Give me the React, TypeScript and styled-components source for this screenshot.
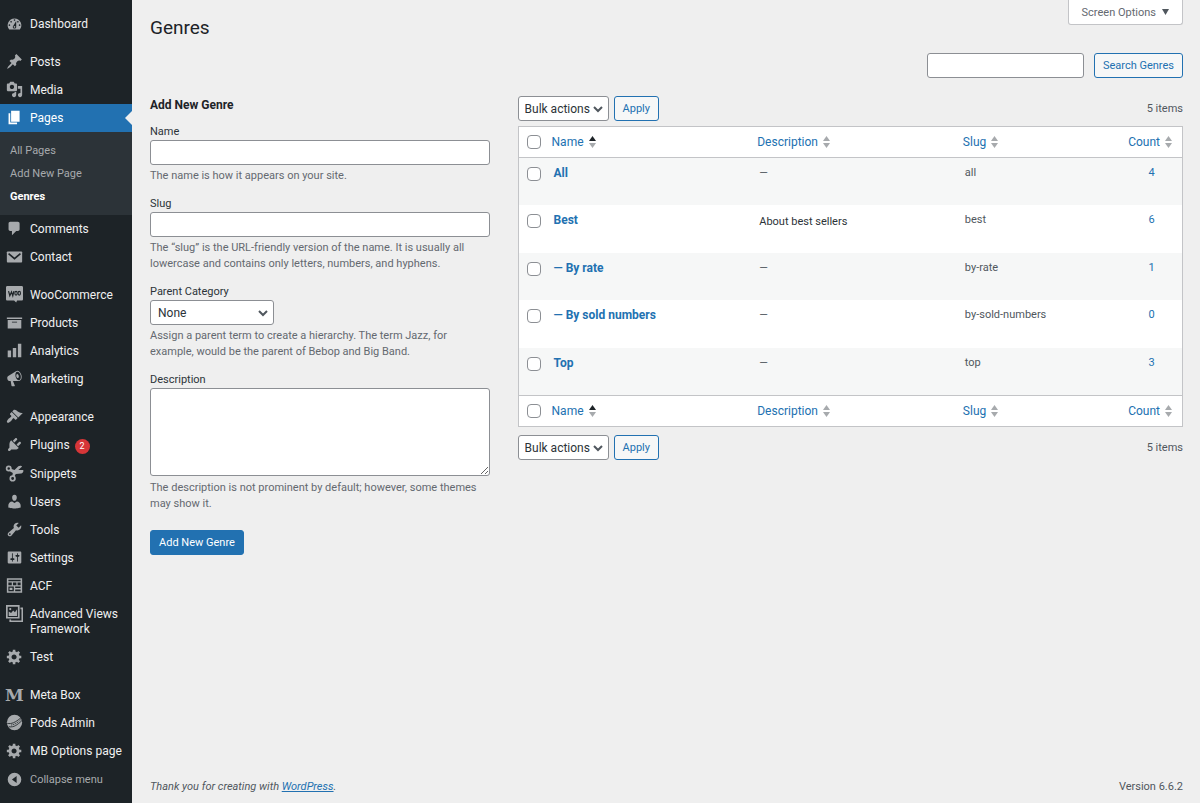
import React, { ReactNode } from "react";
import styled, { createGlobalStyle, css } from "styled-components";

const blue = "#2271b1";
const font = `Roboto, "Open Sans", sans-serif`;

const GlobalStyle = createGlobalStyle`
  *, *::before, *::after { box-sizing: border-box; }
  body { margin: 0; background: #efefef; color: #3c434a; font: 11px/16px ${font}; }
  button, input, select, textarea { font-family: inherit; margin: 0; }
  a { color: ${blue}; text-decoration: none; }
  h1, h2, p, ul { margin: 0; padding: 0; }
`;

/* ---------- icons ---------- */

const paths = {
  dashboard:
    "M3.76 17h12.48A7.998 7.998 0 0 0 10 4a7.998 7.998 0 0 0-6.24 13zM10 5c.55 0 1 .45 1 1s-.45 1-1 1-1-.45-1-1 .45-1 1-1zM6 7c.55 0 1 .45 1 1s-.45 1-1 1-1-.45-1-1 .45-1 1-1zm8 0c.55 0 1 .45 1 1s-.45 1-1 1-1-.45-1-1 .45-1 1-1zm-5.37 5.55L12 7v7c0 1.1-.9 2-2 2s-2-.9-2-2c0-.57.24-1.08.63-1.45zM4 11c.55 0 1 .45 1 1s-.45 1-1 1-1-.45-1-1 .45-1 1-1zm12 0c.55 0 1 .45 1 1s-.45 1-1 1-1-.45-1-1 .45-1 1-1zm-5 3c0-.55-.45-1-1-1s-1 .45-1 1 .45 1 1 1 1-.45 1-1z",
  pin: "M10.44 3.02l1.82-1.82 6.36 6.35-1.83 1.82c-1.05-.68-2.48-.57-3.41.36l-.75.75c-.92.93-1.04 2.35-.35 3.41l-1.83 1.82-2.41-2.41-2.8 2.79c-.42.42-3.38 2.71-3.8 2.29s1.86-3.39 2.28-3.81l2.79-2.79L4.1 9.36l1.83-1.82c1.05.69 2.48.57 3.4-.36l.75-.75c.93-.92 1.05-2.35.36-3.41z",
  media:
    "M13 11V4c0-.55-.45-1-1-1h-1.67L9 1H5L3.67 3H2c-.55 0-1 .45-1 1v7c0 .55.45 1 1 1h10c.55 0 1-.45 1-1zM7 4.5c1.38 0 2.5 1.12 2.5 2.5S8.38 9.5 7 9.5 4.5 8.38 4.5 7 5.62 4.5 7 4.5zM14 6h5v10.5c0 1.38-1.12 2.5-2.5 2.5S14 17.88 14 16.5s1.12-2.5 2.5-2.5c.17 0 .34.02.5.05V9h-3V6zm-4 8.05V13h2v3.5c0 1.38-1.12 2.5-2.5 2.5S7 17.88 7 16.5 8.12 14 9.5 14c.17 0 .34.02.5.05z",
  pages: "M6 15V2h10v13H6zm-1 1h8v2H3V5h2v11z",
  comment:
    "M5 2h9c1.1 0 2 .9 2 2v7c0 1.1-.9 2-2 2h-2l-5 5v-5H5c-1.1 0-2-.9-2-2V4c0-1.1.9-2 2-2z",
  archive: "M19 4v2H1V4h18zM2 7h16v10H2V7zm11 3V9H7v1h6z",
  bars: "M18 18V2h-4v16h4zm-6 0V7H8v11h4zm-6 0v-8H2v8h4z",
  megaphone:
    "M18.15 5.94c.46 1.62.38 3.22-.02 4.48-.42 1.28-1.26 2.18-2.3 2.48-.16.06-.26.06-.4.06-.06.02-.12.02-.18.02-.06.02-.14.02-.22.02h-6.8l2.22 5.5c.02.14-.06.26-.14.34-.08.1-.24.16-.34.16H6.95c-.1 0-.26-.06-.34-.16-.08-.08-.16-.2-.14-.34l-1-5.5H4.25l-.02-.02c-.5.06-1.08-.18-1.54-.62s-.88-1.08-1.06-1.88c-.24-.8-.2-1.56-.02-2.2.18-.62.58-1.08 1.06-1.3l.02-.02 9-5.4c.1-.06.18-.1.24-.16.06-.04.14-.08.24-.12.16-.08.28-.12.5-.18 1.04-.3 2.24.1 3.22.98s1.84 2.24 2.26 3.86zm-2.58 5.98h-.02c.4-.1.74-.34 1.04-.7.58-.7.86-1.76.86-3.04 0-.64-.1-1.3-.28-1.98-.34-1.36-1.02-2.5-1.78-3.24s-1.68-1.1-2.46-.88c-.82.22-1.4.96-1.7 2-.32 1.04-.28 2.36.06 3.72.38 1.36 1 2.5 1.8 3.24.78.74 1.62 1.1 2.48.88zm-2.54-7.08c.22-.04.42-.02.62.04.38.16.76.48 1.02 1s.42 1.2.42 1.78c0 .3-.04.56-.12.8-.18.48-.44.84-.86.94-.34.1-.8-.06-1.14-.4s-.64-.86-.78-1.5c-.18-.62-.12-1.24.02-1.72s.48-.84.82-.94z",
  brush:
    "M14.48 11.06L7.41 3.99l1.5-1.5c.5-.56 2.3-.47 3.51.32 1.21.8 1.43 1.28 2.91 2.1 1.18.64 2.45 1.26 4.45.85zm-.71.71L6.7 4.7 4.93 6.47c-.39.39-.39 1.02 0 1.41l1.06 1.06c.39.39.39 1.03 0 1.42-.6.6-1.43 1.11-2.21 1.69-.35.26-.7.53-1.01.84C1.43 14.23.4 16.08 1.4 17.07c.99 1 2.84-.03 4.18-1.36.31-.31.58-.66.85-1.02.57-.78 1.08-1.61 1.69-2.21.39-.39 1.02-.39 1.41 0l1.06 1.06c.39.39 1.02.39 1.41 0z",
  plug: "M13.11 4.36L9.87 7.6 8 5.73l3.24-3.24c.35-.34 1.05-.2 1.56.32.52.51.66 1.21.31 1.55zm-8 1.77l.91-1.12 9.01 9.01-1.19.84c-.71.71-2.63 1.16-3.82 1.16H6.14L4.9 17.26c-.59.59-1.54.59-2.12 0-.59-.58-.59-1.53 0-2.12l1.24-1.24v-3.88c0-1.13.4-3.19 1.09-3.89zm7.26 3.97l3.24-3.24c.34-.35 1.04-.21 1.55.31.52.51.66 1.21.31 1.55l-3.24 3.25z",
  user: "M10 9.25c-2.27 0-2.73-3.44-2.73-3.44C7 4.02 7.82 2 9.97 2c2.16 0 2.98 2.02 2.71 3.81 0 0-.41 3.44-2.68 3.44zm0 2.57L12.72 10c2.39 0 4.52 2.33 4.52 4.53v2.49s-3.65 1.13-7.24 1.13c-3.65 0-7.24-1.13-7.24-1.13v-2.49c0-2.25 1.94-4.48 4.47-4.48z",
  wrench:
    "M16.68 9.77c-1.34 1.34-3.3 1.67-4.95.99l-5.41 6.52c-.99.99-2.59.99-3.58 0s-.99-2.59 0-3.57l6.52-5.42c-.68-1.65-.35-3.61.99-4.95 1.28-1.28 3.12-1.62 4.72-1.06l-2.89 2.89 2.82 2.82 2.86-2.87c.53 1.58.18 3.39-1.08 4.65zM3.81 16.21c.4.39 1.04.39 1.43 0 .4-.4.4-1.04 0-1.43-.39-.4-1.03-.4-1.43 0-.39.39-.39 1.03 0 1.43z",
  sliders:
    "M18 16V4c0-.55-.45-1-1-1H3c-.55 0-1 .45-1 1v12c0 .55.45 1 1 1h14c.55 0 1-.45 1-1zM8 11h1c.55 0 1 .45 1 1s-.45 1-1 1H8v1.5c0 .28-.22.5-.5.5s-.5-.22-.5-.5V13H6c-.55 0-1-.45-1-1s.45-1 1-1h1V5.5c0-.28.22-.5.5-.5s.5.22.5.5V11zm5-2h-1c-.55 0-1-.45-1-1s.45-1 1-1h1V5.5c0-.28.22-.5.5-.5s.5.22.5.5V7h1c.55 0 1 .45 1 1s-.45 1-1 1h-1v5.5c0 .28-.22.5-.5.5s-.5-.22-.5-.5V9z",
  gear: "M18 12h-2.18c-.17.7-.44 1.35-.81 1.93l1.54 1.54-2.1 2.1-1.54-1.54c-.58.36-1.23.63-1.91.79V19H8v-2.18c-.68-.16-1.33-.43-1.91-.79l-1.54 1.54-2.12-2.12 1.54-1.54c-.36-.58-.63-1.23-.79-1.91H1V9.03h2.17c.16-.7.44-1.35.8-1.94L2.43 5.55l2.1-2.1 1.54 1.54c.58-.37 1.24-.64 1.93-.81V2h3v2.18c.68.16 1.33.43 1.91.79l1.54-1.54 2.12 2.12-1.54 1.54c.36.59.64 1.24.8 1.94H18V12zm-8.5 1.5c1.66 0 3-1.34 3-3s-1.34-3-3-3-3 1.34-3 3 1.34 3 3 3z",
};

const IconSvg = styled.svg`
  flex: none;
  width: 17px;
  height: 17px;
  fill: currentColor;
  overflow: visible;
`;

const Icon = ({ children }: { children: ReactNode }) => (
  <IconSvg viewBox="0 0 20 20" aria-hidden="true">{children}</IconSvg>
);
const glyph = (name: keyof typeof paths) => (
  <Icon><path fillRule="evenodd" d={paths[name]} /></Icon>
);

const mailIcon = (
  <Icon>
    <rect x="1" y="4" width="18" height="13" rx="1" />
    <path d="M3 6.500l7 6 7-6" fill="none" stroke="#1d2327" strokeWidth="1.900" />
  </Icon>
);
const wooIcon = (
  <Icon>
    <path d="M1.500 0h17c.8 0 1.500.7 1.500 1.500v14c0 .8-.7 1.500-1.500 1.500H13l-1 2.500L9.500 17h-8C.7 17 0 16.300 0 15.500v-14C0 .7.7 0 1.500 0z" />
    <path
      d="M3 6l1.500 5.500L6.500 7 8 11.500 9.300 6"
      fill="none" stroke="#1d2327" strokeWidth="1.400"
    />
    <ellipse cx="11.800" cy="8.500" rx="1.400" ry="2.200" fill="none" stroke="#1d2327" strokeWidth="1.300" />
    <ellipse cx="15.600" cy="8.500" rx="1.400" ry="2.200" fill="none" stroke="#1d2327" strokeWidth="1.300" />
  </Icon>
);
const scissorsIcon = (
  <Icon>
    <g fill="none" stroke="currentColor" strokeWidth="2">
      <circle cx="3.200" cy="4.200" r="2.500" />
      <circle cx="7.800" cy="15.800" r="2.700" />
    </g>
    <path d="M5 4l5 1.800L14.500 1.500c1.200-1 3.800-1 4.500.3L14.500 6h5.500c1 0 .5 4-2 4l-6.500.5-2 3.700-2.200-.8L8 9.500 4 7z" />
  </Icon>
);
const acfIcon = (
  <Icon>
    <path
      fillRule="evenodd"
      d="M1 1.500h18v17H1zM2.800 3.300V5h14.400V3.300zM2.800 6.600v3h4v-3zM8.200 6.600v3h4v-3zM13.600 6.600v3h3.600v-3zM2.800 11.200v5.500h6.400v-5.500zM10.800 11.200v1.600h6.400v-1.600zM10.800 14.600v2.100h6.400v-2.100zM4.200 12.500h3.400v2.800H4.200z"
    />
  </Icon>
);
const galleryIcon = (
  <Icon>
    <path fillRule="evenodd" d="M0 0h16v16H0zM2 2v12h12V2z" />
    <path d="M3.200 13V7.500L6 9.500l2.500-3 2 2L13 5v8z" />
    <circle cx="5" cy="4.800" r="1.300" />
    <path d="M17 3h3v17H4v-3h2v1.300h12.200V5H17z" />
  </Icon>
);
const metaBoxIcon = (
  <Icon>
    <text x="10" y="18" textAnchor="middle" fontFamily="DejaVu Serif" fontWeight="700" fontSize="20">M</text>
  </Icon>
);
const podsIcon = (
  <Icon>
    <circle cx="10" cy="10" r="9" />
    <path
      d="M1.500 11c5 1 9.500-1 16-6.500M3.500 15c6 1 10-2.500 15-7"
      fill="none" stroke="#1d2327" strokeWidth="1"
    />
    <path d="M6 13c4-.5 7.500-2.500 11.500-6.500" fill="none" stroke="#1d2327" strokeWidth="1" strokeDasharray="1.500 1" />
  </Icon>
);
const collapseIcon = (
  <Icon>
    <path fillRule="evenodd" d="M10 2a8 8 0 1 0 0 16 8 8 0 0 0 0-16zM12.500 6v8L7 10z" />
  </Icon>
);

/* ---------- sidebar ---------- */

const Layout = styled.div`
  display: flex;
  min-height: 100vh;
`;

const Sidebar = styled.nav`
  flex: none;
  width: 132px;
  padding-top: 10px;
  background: #1d2327;
`;

const MenuGroup = styled.ul`
  list-style: none;
  & + & { margin-top: 10px; }
`;

const MenuLink = styled.a<{ $current?: boolean }>`
  position: relative;
  display: flex;
  align-items: flex-start;
  gap: 7px;
  padding: 7px 6px 6px;
  color: #f0f0f1;
  font-size: 12px;
  line-height: 15px;
  svg { color: #a7aaad; margin-top: -2px; }
  ${(p) =>
    p.$current &&
    css`
      background: ${blue};
      color: #fff;
      svg { color: #fff; }
      &::after {
        content: "";
        position: absolute;
        top: 7px;
        right: 0;
        border: 7px solid transparent;
        border-left: 0;
        border-right-color: #efefef;
      }
    `}
`;

const Badge = styled.span`
  display: inline-block;
  min-width: 15px;
  margin-left: 5px;
  border-radius: 8px;
  background: #d63638;
  color: #fff;
  font-size: 9px;
  line-height: 15px;
  text-align: center;
`;

const Submenu = styled.ul`
  list-style: none;
  padding: 7px 0;
  background: #2c3338;
`;

const SubLink = styled.a<{ $current?: boolean }>`
  display: block;
  padding: 0 10px;
  color: ${(p) => (p.$current ? "#fff" : "#a7aaad")};
  font-size: 11px;
  font-weight: ${(p) => (p.$current ? 700 : 400)};
  line-height: 23px;
`;

const CollapseButton = styled.button`
  display: flex;
  align-items: center;
  gap: 7px;
  width: 100%;
  height: 28px;
  padding: 0 6px;
  border: 0;
  background: none;
  color: #a7aaad;
  font-size: 11px;
`;

type Item = { label: string; icon: ReactNode; badge?: number; current?: boolean; children?: string[] };

const menu: Item[][] = [
  [{ label: "Dashboard", icon: glyph("dashboard") }],
  [
    { label: "Posts", icon: glyph("pin") },
    { label: "Media", icon: glyph("media") },
    { label: "Pages", icon: glyph("pages"), current: true, children: ["All Pages", "Add New Page", "Genres"] },
    { label: "Comments", icon: glyph("comment") },
    { label: "Contact", icon: mailIcon },
  ],
  [
    { label: "WooCommerce", icon: wooIcon },
    { label: "Products", icon: glyph("archive") },
    { label: "Analytics", icon: glyph("bars") },
    { label: "Marketing", icon: glyph("megaphone") },
  ],
  [
    { label: "Appearance", icon: glyph("brush") },
    { label: "Plugins", icon: glyph("plug"), badge: 2 },
    { label: "Snippets", icon: scissorsIcon },
    { label: "Users", icon: glyph("user") },
    { label: "Tools", icon: glyph("wrench") },
    { label: "Settings", icon: glyph("sliders") },
    { label: "ACF", icon: acfIcon },
    { label: "Advanced Views Framework", icon: galleryIcon },
    { label: "Test", icon: glyph("gear") },
  ],
  [
    { label: "Meta Box", icon: metaBoxIcon },
    { label: "Pods Admin", icon: podsIcon },
    { label: "MB Options page", icon: glyph("gear") },
  ],
];

/* ---------- form controls ---------- */

const field = css`
  border: 1px solid #8c8f94;
  border-radius: 3px;
  background: #fff;
  color: #2c3338;
  font-size: 12px;
`;

const TextInput = styled.input`
  ${field}
  display: block;
  width: 100%;
  height: 25px;
  padding: 0 7px;
`;

const TextArea = styled.textarea`
  ${field}
  display: block;
  width: 100%;
  height: 88px;
  margin-bottom: 4px;
  padding: 2px 5px;
  resize: both;
`;

const SelectWrap = styled.div<{ $wide?: boolean }>`
  position: relative;
  width: ${(p) => (p.$wide ? 124 : 91)}px;
  svg {
    position: absolute;
    top: 7px;
    right: 5px;
    width: 12px;
    height: 12px;
    fill: none;
    stroke: #50575e;
    stroke-width: 2;
    pointer-events: none;
  }
`;

const SelectBox = styled.select<{ $wide?: boolean }>`
  ${field}
  appearance: none;
  display: block;
  width: 100%;
  height: 25px;
  padding: 0 ${(p) => (p.$wide ? 7 : 6)}px;
`;

const Select = ({ label, id, option, wide }: { label?: string; id: string; option: string; wide?: boolean }) => (
  <SelectWrap $wide={wide}>
    <SelectBox id={id} aria-label={label} $wide={wide}>
      <option>{option}</option>
    </SelectBox>
    <svg viewBox="0 0 12 12" aria-hidden="true"><path d="M2 4l4 4 4-4" /></svg>
  </SelectWrap>
);

const Button = styled.button<{ $primary?: boolean }>`
  height: 25px;
  padding: 0 8px;
  border: 1px solid ${blue};
  border-radius: 3px;
  background: ${(p) => (p.$primary ? blue : "#f6f7f7")};
  color: ${(p) => (p.$primary ? "#fff" : blue)};
  font-size: 11px;
  white-space: nowrap;
`;

const Checkbox = styled.input.attrs({ type: "checkbox" })`
  appearance: none;
  display: block;
  width: 14px;
  height: 14px;
  border: 1px solid #8c8f94;
  border-radius: 4px;
  background: #fff;
`;

/* ---------- page ---------- */

const Page = styled.div`
  flex: 1;
  min-width: 0;
  display: flex;
  flex-direction: column;
  padding: 0 17px 0 18px;
`;

const TopBar = styled.header`
  display: flex;
  justify-content: space-between;
  align-items: flex-start;
`;

const Title = styled.h1`
  padding-top: 15px;
  color: #1d2327;
  font-size: 19px;
  font-weight: 400;
  line-height: 26px;
`;

const ScreenOptions = styled.button`
  display: flex;
  align-items: center;
  gap: 6px;
  height: 25px;
  padding: 0 13px;
  border: 1px solid #c3c4c7;
  border-top: 0;
  border-radius: 0 0 3px 3px;
  background: #fff;
  color: #646970;
  font-size: 11px;
  svg { width: 7px; height: 6px; fill: #50575e; }
`;

const SearchForm = styled.form`
  display: flex;
  justify-content: flex-end;
  gap: 10px;
  margin-top: 12px;
`;

const SearchInput = styled(TextInput)`
  width: 157px;
`;

const Columns = styled.div`
  display: flex;
  margin-top: 18px;
`;

const FormColumn = styled.section`
  flex: none;
  width: 35%;
  padding-right: 22px;
`;

const ListColumn = styled.section`
  flex: 1;
  min-width: 0;
  padding-left: 6px;
`;

const FormTitle = styled.h2`
  color: #1d2327;
  font-size: 12px;
  font-weight: 700;
  line-height: 18px;
`;

const Field = styled.div`
  margin-top: 12px;
  label { display: block; color: #2c3338; line-height: 16px; }
  p { margin-top: 3px; color: #646970; line-height: 16px; }
`;

const Fields = styled.div`
  padding: 10px 0 18px;
  ${Field}:first-child { margin-top: 0; }
`;

const TableNav = styled.div`
  display: flex;
  align-items: center;
  gap: 5px;
`;

const ItemCount = styled.span`
  margin-left: auto;
  color: #50575e;
`;

const Table = styled.table`
  width: 100%;
  margin: 5px 0 8px;
  border: 1px solid #c3c4c7;
  border-spacing: 0;
  table-layout: fixed;
  background: #fff;
  th, td { padding: 0; text-align: left; vertical-align: middle; font-weight: 400; }
  thead th, thead td { height: 31px; border-bottom: 1px solid #c3c4c7; }
  tfoot th, tfoot td { height: 31px; border-top: 1px solid #c3c4c7; }
`;

const CheckCell = styled.td`
  && { padding-left: 8px; }
`;

const HeadCell = styled.th<{ $end?: boolean }>`
  && { text-align: ${(p) => (p.$end ? "right" : "left")}; padding-right: ${(p) => (p.$end ? 10 : 0)}px; }
`;

const SortLink = styled.a`
  display: inline-flex;
  align-items: center;
  gap: 5px;
  font-size: 12px;
  line-height: 16px;
  svg { width: 7px; height: 12px; fill: #a7aaad; }
`;

const Row = styled.tr`
  height: 47px;
  &:nth-child(odd) { background: #f6f7f7; }
  &:nth-child(even) { height: 48px; }
  && > * { vertical-align: top; padding-top: 7px; }
  && > td:first-child { padding-top: 9px; }
`;

const NameCell = styled.th`
  && { padding-left: 2px; font-size: 12px; font-weight: 700; }
`;

const TextCell = styled.td<{ $lower?: boolean }>`
  && { padding-left: 2px; color: #50575e; ${(p) => p.$lower && "padding-top: 9px; color: #2c3338;"} }
`;

const CountCell = styled.td`
  &&& { text-align: center; padding-left: 12px; }
`;

const Footer = styled.footer`
  display: flex;
  justify-content: space-between;
  margin-top: auto;
  padding-bottom: 8px;
  color: #50575e;
  a { text-decoration: underline; }
`;

const SortMark = ({ asc }: { asc?: boolean }) => (
  <svg viewBox="0 0 7 12" aria-hidden="true">
    <path d="M0 5L3.500 0L7 5z" fill={asc ? "#1d2327" : undefined} />
    <path d="M0 7h7L3.500 12z" />
  </svg>
);

const HeaderRow = ({ id }: { id: string }) => (
  <tr>
    <CheckCell><Checkbox id={id} aria-label="Select all" /></CheckCell>
    <HeadCell scope="col"><SortLink href="#name">Name <SortMark asc /></SortLink></HeadCell>
    <HeadCell scope="col"><SortLink href="#description">Description <SortMark /></SortLink></HeadCell>
    <HeadCell scope="col"><SortLink href="#slug">Slug <SortMark /></SortLink></HeadCell>
    <HeadCell scope="col" $end><SortLink href="#count">Count <SortMark /></SortLink></HeadCell>
  </tr>
);

const BulkActions = ({ id }: { id: string }) => (
  <TableNav>
    <Select id={id} label="Bulk actions" option="Bulk actions" />
    <Button type="button">Apply</Button>
    <ItemCount>5 items</ItemCount>
  </TableNav>
);

const genres = [
  { name: "All", description: "", slug: "all", count: 4 },
  { name: "Best", description: "About best sellers", slug: "best", count: 6 },
  { name: "— By rate", description: "", slug: "by-rate", count: 1 },
  { name: "— By sold numbers", description: "", slug: "by-sold-numbers", count: 0 },
  { name: "Top", description: "", slug: "top", count: 3 },
];

export default function App() {
  return (
    <Layout>
      <GlobalStyle />
      <Sidebar aria-label="Main menu">
        {menu.map((group, i) => (
          <MenuGroup key={i}>
            {group.map((item) => (
              <li key={item.label}>
                <MenuLink href="#menu" $current={item.current}>
                  {item.icon}
                  <span>
                    {item.label}
                    {item.badge && <Badge>{item.badge}</Badge>}
                  </span>
                </MenuLink>
                {item.children && (
                  <Submenu>
                    {item.children.map((child) => (
                      <li key={child}>
                        <SubLink href="#submenu" $current={child === "Genres"}>{child}</SubLink>
                      </li>
                    ))}
                  </Submenu>
                )}
              </li>
            ))}
          </MenuGroup>
        ))}
        <CollapseButton type="button">{collapseIcon}Collapse menu</CollapseButton>
      </Sidebar>

      <Page>
        <TopBar>
          <Title>Genres</Title>
          <ScreenOptions type="button">
            Screen Options
            <svg viewBox="0 0 7 6" aria-hidden="true"><path d="M0 0h7L3.500 6z" /></svg>
          </ScreenOptions>
        </TopBar>

        <SearchForm>
          <SearchInput type="search" aria-label="Search Genres" />
          <Button type="button">Search Genres</Button>
        </SearchForm>

        <Columns>
          <FormColumn>
            <FormTitle>Add New Genre</FormTitle>
            <Fields>
              <Field>
                <label htmlFor="name">Name</label>
                <TextInput id="name" />
                <p>The name is how it appears on your site.</p>
              </Field>
              <Field>
                <label htmlFor="slug">Slug</label>
                <TextInput id="slug" />
                <p>
                  The “slug” is the URL-friendly version of the name. It is usually all
                  lowercase and contains only letters, numbers, and hyphens.
                </p>
              </Field>
              <Field>
                <label htmlFor="parent">Parent Category</label>
                <Select id="parent" option="None" wide />
                <p>
                  Assign a parent term to create a hierarchy. The term Jazz, for
                  example, would be the parent of Bebop and Big Band.
                </p>
              </Field>
              <Field>
                <label htmlFor="description">Description</label>
                <TextArea id="description" />
                <p>
                  The description is not prominent by default; however, some themes
                  may show it.
                </p>
              </Field>
            </Fields>
            <Button type="button" $primary>Add New Genre</Button>
          </FormColumn>

          <ListColumn>
            <BulkActions id="bulk-top" />
            <Table>
              <colgroup>
                <col width="33" />
                <col width="31%" />
                <col width="31%" />
                <col />
                <col width="11%" />
              </colgroup>
              <thead><HeaderRow id="all-top" /></thead>
              <tbody>
                {genres.map((g) => (
                  <Row key={g.slug}>
                    <CheckCell><Checkbox id={"cb-" + g.slug} aria-label={"Select " + g.name} /></CheckCell>
                    <NameCell scope="row"><a href="#edit">{g.name}</a></NameCell>
                    <TextCell $lower={g.description !== ""}>{g.description || "—"}</TextCell>
                    <TextCell>{g.slug}</TextCell>
                    <CountCell><a href="#posts">{g.count}</a></CountCell>
                  </Row>
                ))}
              </tbody>
              <tfoot><HeaderRow id="all-bottom" /></tfoot>
            </Table>
            <BulkActions id="bulk-bottom" />
          </ListColumn>
        </Columns>

        <Footer>
          <em>Thank you for creating with <a href="#wordpress">WordPress</a>.</em>
          <span>Version 6.6.2</span>
        </Footer>
      </Page>
    </Layout>
  );
}
